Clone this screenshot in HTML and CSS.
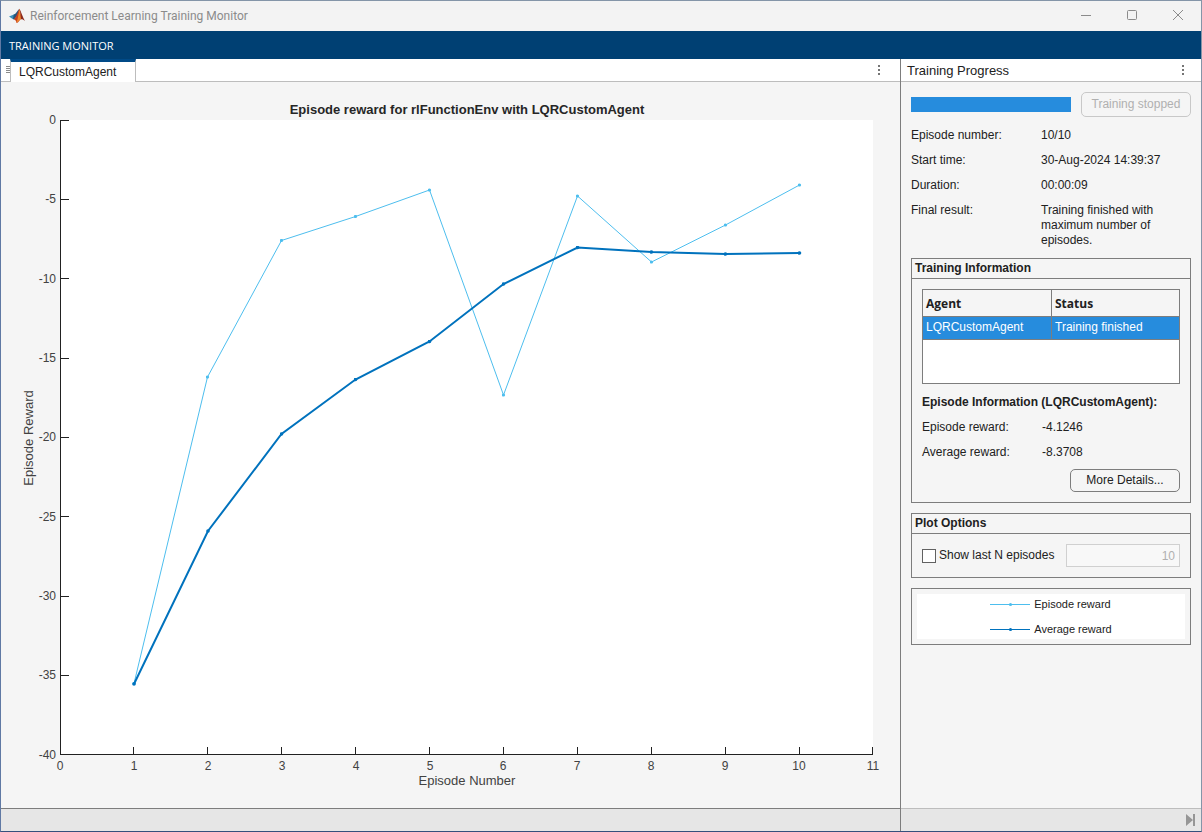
FILE: index.html
```html
<!DOCTYPE html>
<html lang="en">
<head>
    <meta charset="UTF-8">
    <meta name="viewport" content="width=device-width, initial-scale=1.0">
    <title>Reinforcement Learning Training Monitor</title>
    <link rel="stylesheet" href="styles.css">
</head>
<body>
    <div class="window">
        <!-- Title bar -->
        <header class="title-bar">
            <svg class="app-icon" width="16" height="16" viewBox="0 0 16 16" aria-hidden="true">
                <path d="M0 8.6L4.8 6.4 7 8.4 4.4 11.6z" fill="#3b8fb8"/>
                <path d="M4.8 6.4C7 6 8 3.200 10.400 0.800L8.600 7 5.400 11.400 4 10.800z" fill="#28567c"/>
                <path d="M10.400 0.800C9 3 8 9 4.400 11.600 6 11 7 12.600 7.600 15 9.800 14.600 11 11 12.400 11 12 7 11.400 3 10.400 0.800z" fill="#c8401c"/>
                <path d="M10.600 1C9.600 5 9.200 10 7.400 14.800 9.600 13.800 11 10.800 12 11z" fill="#ef8a2c"/>
                <path d="M10.400 0.800C12.200 3.600 13.800 9.600 16 13 14.400 11.600 13.400 11 12 11.200 11.800 7 11.200 3 10.400 0.800z" fill="#8c2a1c"/>
            </svg>
            <h1>Reinforcement Learning Training Monitor</h1>
            <div class="window-buttons">
                <button type="button" aria-label="Minimize">
                    <svg width="12" height="12" viewBox="0 0 12 12"><path d="M1 5.500h10"/></svg>
                </button>
                <button type="button" aria-label="Maximize">
                    <svg width="12" height="12" viewBox="0 0 12 12"><rect x="1.500" y="0.500" width="9" height="9" rx="1"/></svg>
                </button>
                <button type="button" aria-label="Close">
                    <svg width="12" height="12" viewBox="0 0 12 12"><path d="M1 0l10 10M11 0L1 10"/></svg>
                </button>
            </div>
        </header>

        <nav class="toolstrip"><a href="#monitor">TRAINING MONITOR</a></nav>

        <div class="workspace" id="monitor">
            <!-- Plot document -->
            <main class="document">
                <div class="tab-bar">
                    <svg class="grip" width="4" height="8" viewBox="0 0 4 8" aria-hidden="true"><path d="M0 0.500h4M0 2.500h4M0 4.500h4M0 6.500h4"/></svg>
                    <button type="button" class="tab">LQRCustomAgent</button>
                    <button type="button" class="menu-dots" aria-label="Document actions">
                        <svg width="2" height="10" viewBox="0 0 2 10"><path d="M0 0h2v2H0zM0 4h2v2H0zM0 8h2v2H0z"/></svg>
                    </button>
                </div>
                <svg class="chart" viewBox="0 0 899 726" role="img" aria-label="Episode reward chart">
                    <rect x="59" y="38" width="813" height="635" fill="#fff"/>
                    <text class="chart-title" x="466" y="32">Episode reward for rlFunctionEnv with LQRCustomAgent</text>

                    <path class="axis" d="M59.500 38V672.500H872
                        M59.500 38.500h8 M59.500 117.500h8 M59.500 196.500h8 M59.500 276.500h8 M59.500 355.500h8 M59.500 434.500h8 M59.500 514.500h8 M59.500 593.500h8
                        M132.500 672.500v-8 M206.500 672.500v-8 M280.500 672.500v-8 M354.500 672.500v-8 M428.500 672.500v-8 M502.500 672.500v-8
                        M576.500 672.500v-8 M650.500 672.500v-8 M724.500 672.500v-8 M798.500 672.500v-8 M871.500 672.500v-8"/>

                    <g class="tick-y">
                        <text x="55" y="42">0</text>
                        <text x="55" y="121">-5</text>
                        <text x="55" y="201">-10</text>
                        <text x="55" y="280">-15</text>
                        <text x="55" y="359">-20</text>
                        <text x="55" y="439">-25</text>
                        <text x="55" y="518">-30</text>
                        <text x="55" y="597">-35</text>
                        <text x="55" y="677">-40</text>
                    </g>
                    <g class="tick-x">
                        <text x="59" y="688">0</text>
                        <text x="133" y="688">1</text>
                        <text x="207" y="688">2</text>
                        <text x="281" y="688">3</text>
                        <text x="355" y="688">4</text>
                        <text x="429" y="688">5</text>
                        <text x="502" y="688">6</text>
                        <text x="576" y="688">7</text>
                        <text x="650" y="688">8</text>
                        <text x="724" y="688">9</text>
                        <text x="798" y="688">10</text>
                        <text x="872" y="688">11</text>
                    </g>
                    <text class="axis-label" x="466" y="703">Episode Number</text>
                    <text class="axis-label" transform="translate(32 356) rotate(-90)">Episode Reward</text>

                    <defs>
                        <marker id="dot-episode" markerUnits="userSpaceOnUse" markerWidth="4" markerHeight="4" refX="2" refY="2"><circle cx="2" cy="2" r="1.600" fill="#4dbeee"/></marker>
                        <marker id="dot-average" markerUnits="userSpaceOnUse" markerWidth="4" markerHeight="4" refX="2" refY="2"><circle cx="2" cy="2" r="1.800" fill="#0072bd"/></marker>
                    </defs>
                    <polyline class="line-episode" points="133,601.500 206.500,295 280.500,158.500 354.500,134.500 428.500,108 502.500,313 576.500,114 650.500,180 724.500,143 798.500,103"/>
                    <polyline class="line-average" points="133,602 207,449 280.500,352 354.500,297.500 428.500,259.500 502.500,202 576.500,165.500 650.500,170 724.500,172 798.500,171"/>
                </svg>
                <footer class="status-bar"></footer>
            </main>

            <!-- Training progress -->
            <aside class="progress-pane">
                <div class="pane-header">
                    <h2>Training Progress</h2>
                    <button type="button" class="menu-dots" aria-label="Panel actions">
                        <svg width="2" height="10" viewBox="0 0 2 10"><path d="M0 0h2v2H0zM0 4h2v2H0zM0 8h2v2H0z"/></svg>
                    </button>
                </div>

                <div class="pane-content">
                    <div class="progress-row">
                        <div class="progress" role="progressbar" aria-label="Training progress" aria-valuenow="100"><div class="progress-fill" style="width: 100%"></div></div>
                        <button type="button" class="button" disabled>Training stopped</button>
                    </div>

                    <dl class="details">
                        <dt>Episode number:</dt><dd>10/10</dd>
                        <dt>Start time:</dt><dd>30-Aug-2024 14:39:37</dd>
                        <dt>Duration:</dt><dd>00:00:09</dd>
                        <dt>Final result:</dt><dd>Training finished with maximum number of episodes.</dd>
                    </dl>

                    <section class="panel">
                        <h3>Training Information</h3>
                        <div class="panel-body">
                            <div class="table-box">
                                <table>
                                    <thead>
                                        <tr><th>Agent</th><th>Status</th></tr>
                                    </thead>
                                    <tbody>
                                        <tr><td>LQRCustomAgent</td><td>Training finished</td></tr>
                                    </tbody>
                                </table>
                            </div>
                            <h4>Episode Information (LQRCustomAgent):</h4>
                            <dl class="details rewards">
                                <dt>Episode reward:</dt><dd>-4.1246</dd>
                                <dt>Average reward:</dt><dd>-8.3708</dd>
                            </dl>
                            <button type="button" class="button more">More Details...</button>
                        </div>
                    </section>

                    <section class="panel">
                        <h3>Plot Options</h3>
                        <div class="panel-body options">
                            <input type="checkbox" id="show-last">
                            <label for="show-last">Show last N episodes</label>
                            <input type="text" class="count" value="10" aria-label="Number of episodes" disabled>
                        </div>
                    </section>

                    <section class="panel legend-panel">
                        <ul class="legend">
                            <li>
                                <svg width="40" height="5" viewBox="0 0 40 5" aria-hidden="true"><path d="M0 2.500h40" stroke="#4dbeee"/><circle cx="20.500" cy="2.500" r="1.600" fill="#4dbeee"/></svg>
                                Episode reward
                            </li>
                            <li>
                                <svg width="40" height="5" viewBox="0 0 40 5" aria-hidden="true"><path d="M0 2.500h40" stroke="#0072bd"/><circle cx="20.500" cy="2.500" r="1.600" fill="#0072bd"/></svg>
                                Average reward
                            </li>
                        </ul>
                    </section>
                </div>

                <footer class="status-bar">
                    <button type="button" aria-label="Collapse panel">
                        <svg width="10" height="12" viewBox="0 0 10 12"><path d="M0 0l7 6-7 6zM7 0h2v12H7z"/></svg>
                    </button>
                </footer>
            </aside>
        </div>
    </div>
</body>
</html>
```
FILE: styles.css
```css
* {
    margin: 0;
    padding: 0;
    box-sizing: border-box;
}

body {
    font-family: "Liberation Sans", Arial, Helvetica, sans-serif;
    font-size: 12px;
    line-height: 15px;
    color: #212121;
}

button {
    font: inherit;
    color: inherit;
    background: none;
    border: none;
}

svg {
    display: block;
}

.window {
    display: flex;
    flex-direction: column;
    min-height: 100vh;
    border: 1px solid #8495a8;
    border-left-color: #6079a4;
    border-bottom-color: #34507c;
    background-color: #f5f5f5;
}

/* Title bar */
.title-bar {
    display: flex;
    align-items: center;
    height: 30px;
    padding-left: 8px;
    background-color: #f3f3f3;
    color: #8b8b8b;
}

.title-bar h1 {
    flex: 1;
    padding-left: 5px;
    font-family: Roboto, "Noto Sans", sans-serif;
    font-size: 12px;
    font-weight: normal;
}

.window-buttons {
    display: flex;
}

.window-buttons button {
    display: grid;
    place-items: center;
    width: 46px;
    height: 30px;
}

.window-buttons svg {
    fill: none;
    stroke: #8b8b8b;
}

.toolstrip {
    height: 28px;
    padding: 0 8px;
    background-color: #004073;
    line-height: 30px;
}

.toolstrip a {
    font-family: "Open Sans", "Noto Sans", sans-serif;
    font-size: 11px;
    color: #fff;
    text-decoration: none;
}

.workspace {
    display: flex;
    flex: 1;
}

/* Plot document */
.document {
    display: flex;
    flex-direction: column;
    flex: 1;
    min-width: 0;
}

.tab-bar,
.pane-header {
    display: flex;
    align-items: center;
    height: 23px;
    background-color: #fff;
    border-bottom: 1px solid #bdbdbd;
}

.grip {
    margin-left: 5px;
    stroke: #8a8a8a;
}

.tab {
    align-self: flex-start;
    height: 23px;
    width: 126px;
    padding-left: 8px;
    border-top: 3px solid #004a87;
    border-right: 1px solid #bdbdbd;
    border-left: 1px solid #bdbdbd;
    background-color: #fff;
    text-align: left;
}

.menu-dots {
    display: grid;
    place-items: center;
    width: 18px;
    height: 22px;
    margin-left: auto;
    margin-right: 12px;
    fill: #757575;
}

.chart {
    flex: 1;
    width: 100%;
    min-height: 0;
    font-size: 12px;
    fill: #262626;
}

.chart-title {
    font-size: 13px;
    font-weight: bold;
    text-anchor: middle;
}

.axis {
    fill: none;
    stroke: #212121;
    shape-rendering: crispEdges;
}

.tick-y {
    text-anchor: end;
    fill: #424242;
}

.tick-x {
    text-anchor: middle;
    fill: #424242;
}

.axis-label {
    font-size: 13px;
    text-anchor: middle;
    fill: #424242;
}

.line-episode {
    fill: none;
    stroke: #4dbeee;
    stroke-width: 1;
    marker: url(#dot-episode);
}

.line-average {
    fill: none;
    stroke: #0072bd;
    stroke-width: 2;
    marker: url(#dot-average);
}

.status-bar {
    display: flex;
    align-items: center;
    justify-content: flex-end;
    height: 23px;
    padding-right: 5px;
    border-top: 1px solid #7d7d7d;
    background-color: #e6e6e6;
    fill: #969696;
}

/* Training progress */
.progress-pane {
    display: flex;
    flex-direction: column;
    width: 301px;
    border-left: 1px solid #7d7d7d;
}

.progress-pane .status-bar {
    border-top-color: #bdbdbd;
}

.pane-header {
    padding-left: 6px;
}

.pane-header h2 {
    font-size: 13px;
    font-weight: normal;
}

.pane-header .menu-dots {
    margin-right: 9px;
}

.pane-content {
    display: flex;
    flex-direction: column;
    flex: 1;
    padding: 10px;
}

.progress-row {
    display: flex;
    align-items: center;
    gap: 10px;
}

.progress {
    flex: 1;
    height: 15px;
    background-color: #fff;
}

.progress-fill {
    height: 100%;
    background-color: #268cdd;
}

.button {
    width: 110px;
    height: 25px;
    border: 1px solid #7d7d7d;
    border-radius: 5px;
}

.button:disabled {
    border-color: #c8c8c8;
    color: #b0b0b0;
}

.details {
    display: grid;
    grid-template-columns: 130px 1fr;
    row-gap: 10px;
    margin: 11px 0 10px;
}

.panel {
    margin-bottom: 10px;
    border: 1px solid #7d7d7d;
}

.panel h3 {
    height: 20px;
    padding-left: 3px;
    border-bottom: 1px solid #7d7d7d;
    font-size: 12px;
    line-height: 18px;
}

.panel-body {
    padding: 10px;
}

.table-box {
    height: 95px;
    border: 1px solid #7d7d7d;
    background-color: #fff;
}

table {
    width: 100%;
    border-collapse: separate;
    border-spacing: 0;
    table-layout: fixed;
}

th,
td {
    padding-left: 3px;
    border-bottom: 1px solid #7d7d7d;
    text-align: left;
}

th {
    height: 27px;
    background-color: #f5f5f5;
    font-family: "Open Sans", "Noto Sans", sans-serif;
}

td {
    height: 23px;
    padding-bottom: 2px;
    background-color: #268cdd;
    color: #fff;
}

th + th,
td + td {
    border-left: 1px solid #7d7d7d;
}

.panel h4 {
    margin-top: 11px;
    font-size: 12px;
}

.rewards {
    grid-template-columns: 120px 1fr;
    margin: 10px 0 9px;
}

.more {
    display: block;
    height: 23px;
    margin-left: auto;
}

.options {
    display: flex;
    align-items: center;
}

.options input[type="checkbox"] {
    appearance: none;
    width: 14px;
    height: 14px;
    border: 1px solid #616161;
    background-color: #fff;
}

.options label {
    flex: 1;
    padding-left: 3px;
}

.count {
    width: 114px;
    height: 23px;
    padding-right: 4px;
    border: 1px solid #d0d0d0;
    background-color: #f8f8f8;
    font: inherit;
    color: #b0b0b0;
    text-align: right;
}

.legend-panel {
    padding: 5px;
}

.legend {
    display: grid;
    justify-content: center;
    row-gap: 10px;
    padding: 3px 0 2px;
    background-color: #fff;
    font-size: 11px;
    list-style: none;
}

.legend li {
    display: flex;
    align-items: center;
    gap: 4px;
}
```
